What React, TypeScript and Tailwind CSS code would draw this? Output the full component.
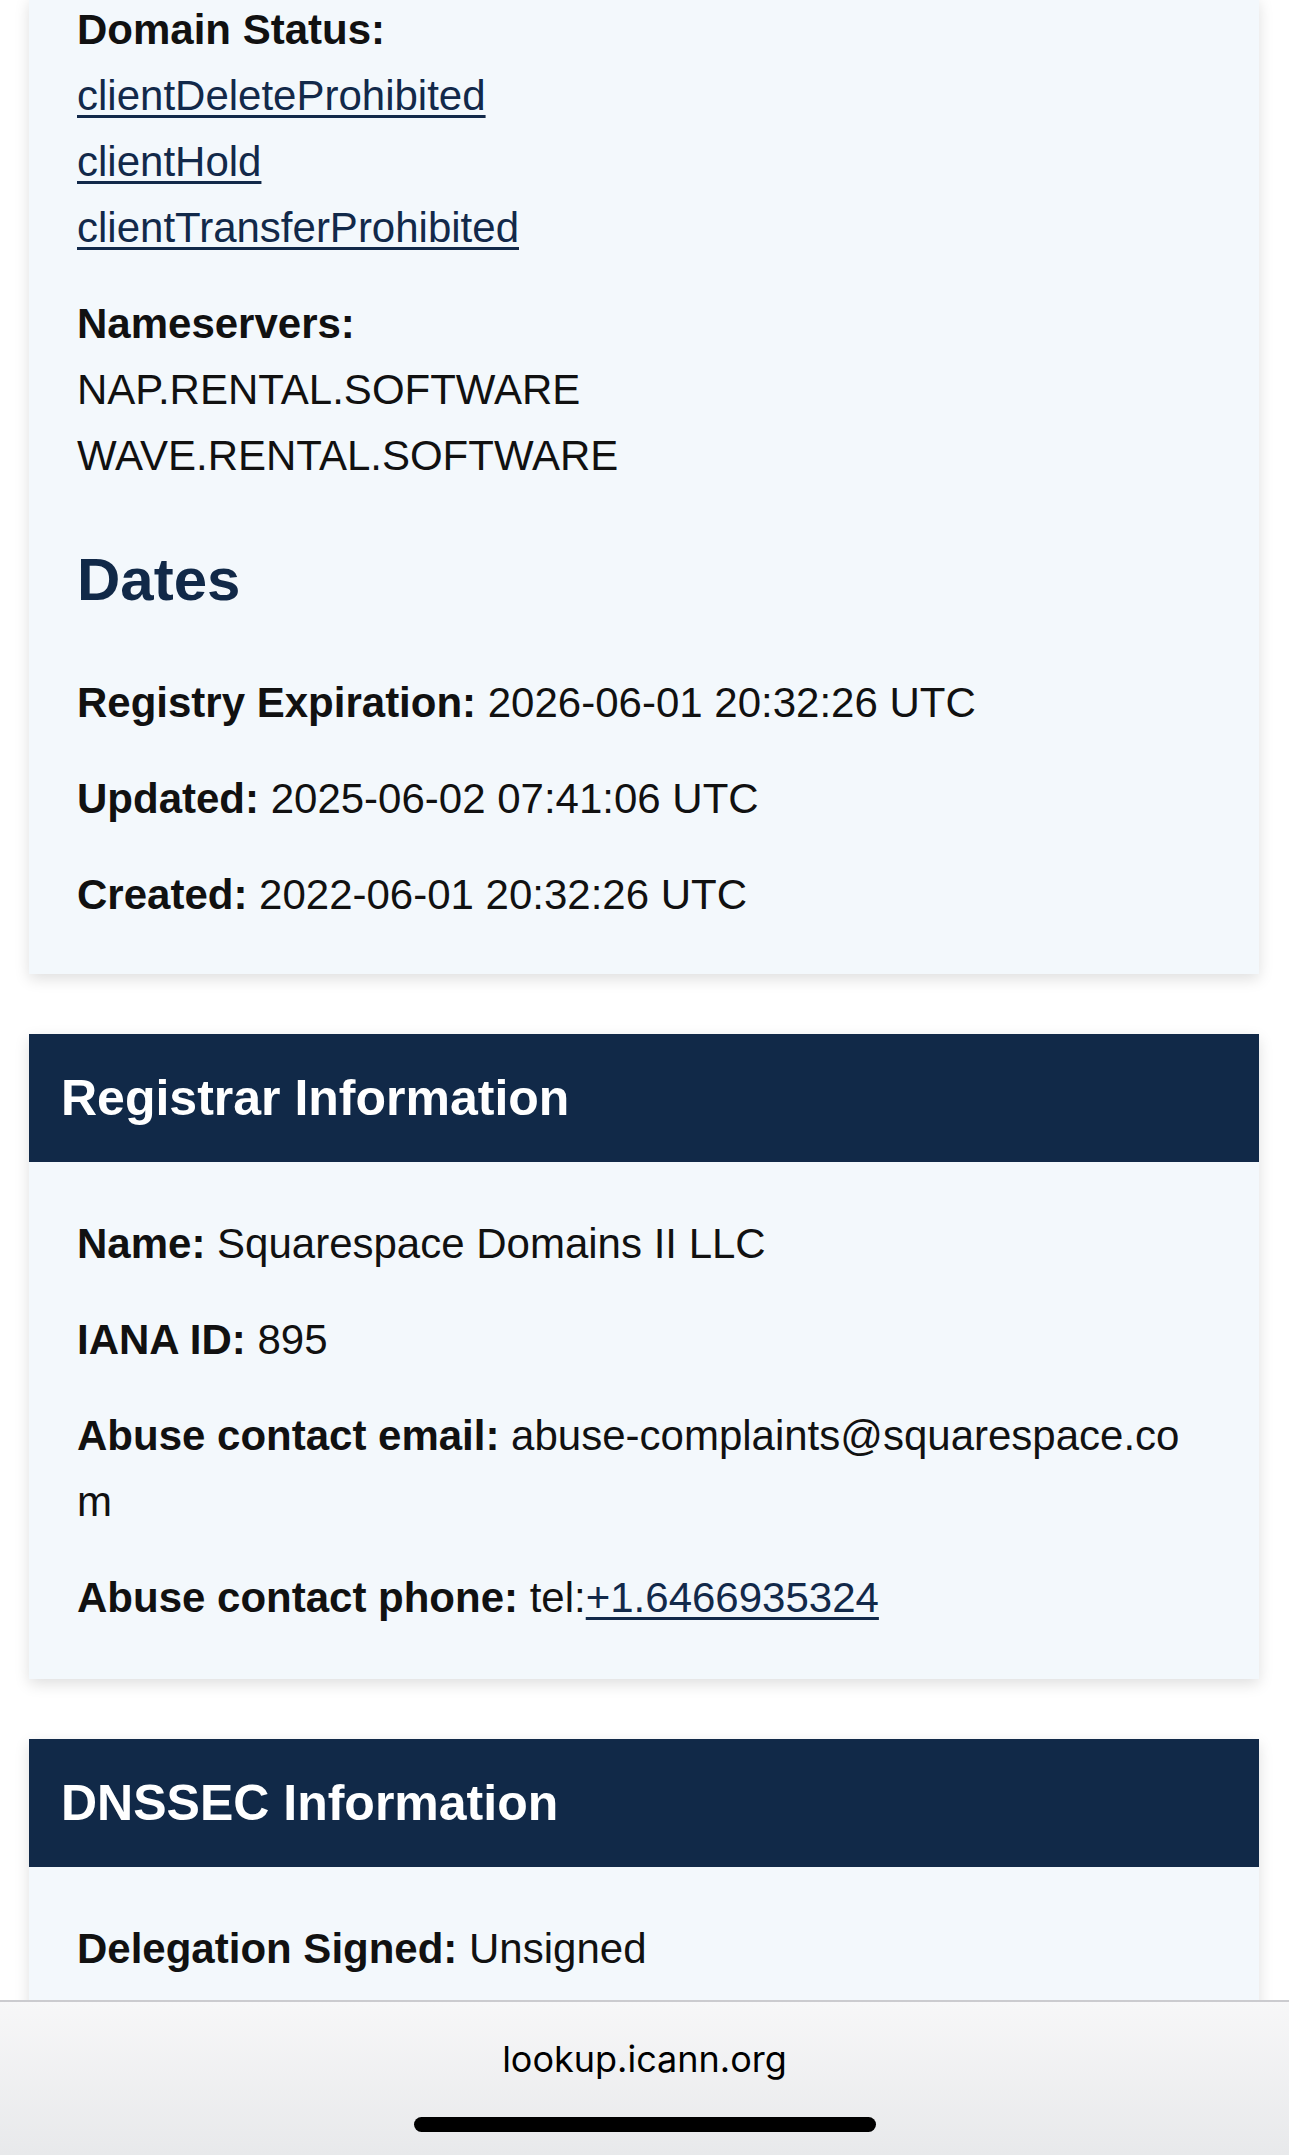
import type { ReactNode } from 'react';

const FONT = '[font-family:"Liberation_Sans",Arial,Helvetica,sans-serif]';

function Field({ label, children }: { label: string; children: ReactNode }) {
  return (
    <p className="text-[42px] leading-[66px] text-[#111]">
      <b className="font-bold">{label}</b> {children}
    </p>
  );
}

function SectionHeader({ title }: { title: string }) {
  return (
    <div className="bg-[#112948] pl-[32px] pr-[30px] py-[35px]">
      <h2 className="text-[50px] leading-[58px] font-bold text-white">{title}</h2>
    </div>
  );
}

const statuses = ['clientDeleteProhibited', 'clientHold', 'clientTransferProhibited'];
const nameservers = ['NAP.RENTAL.SOFTWARE', 'WAVE.RENTAL.SOFTWARE'];

export default function App() {
  return (
    <div className={`relative h-[2155px] overflow-hidden bg-white ${FONT}`}>
      <div className="flex flex-col gap-[60px] pl-[29px] pr-[30px]">
        {/* Domain information (scrolled) */}
        <section className="-mt-[3px] bg-[#f3f8fc] pl-[48px] pr-[57px] pb-[46px] shadow-[0_5px_14px_rgba(0,0,0,0.13)]">
          <div className="text-[42px] leading-[66px] text-[#111]">
            <b className="block font-bold">Domain Status:</b>
            {statuses.map((s) => (
              <a
                key={s}
                href="#"
                className="block w-fit text-[#12294a] underline decoration-[3px] underline-offset-[5px]"
              >
                {s}
              </a>
            ))}
          </div>
          <div className="mt-[30px] text-[42px] leading-[66px] text-[#111]">
            <b className="block font-bold">Nameservers:</b>
            {nameservers.map((n) => (
              <div key={n}>{n}</div>
            ))}
          </div>

          <h3 className="mt-[56px] mb-[56px] text-[60px] leading-[69px] font-bold text-[#112948]">Dates</h3>
          <div className="flex flex-col gap-[30px]">
            <Field label="Registry Expiration:">2026-06-01 20:32:26 UTC</Field>
            <Field label="Updated:">2025-06-02 07:41:06 UTC</Field>
            <Field label="Created:">2022-06-01 20:32:26 UTC</Field>
          </div>
        </section>

        {/* Registrar */}
        <section className="bg-[#f3f8fc] shadow-[0_5px_14px_rgba(0,0,0,0.13)]">
          <SectionHeader title="Registrar Information" />
          <div className="flex flex-col gap-[30px] pl-[48px] pr-[57px] pt-[49px] pb-[48px]">
            <Field label="Name:">Squarespace Domains II LLC</Field>
            <Field label="IANA ID:">895</Field>
            <p className="text-[42px] leading-[66px] text-[#111] break-all">
              <b className="font-bold break-normal">Abuse contact email:</b> abuse-complaints@squarespace.com
            </p>
            <Field label="Abuse contact phone:">
              tel:
              <a href="#" className="text-[#12294a] underline decoration-[3px] underline-offset-[5px]">
                +1.6466935324
              </a>
            </Field>
          </div>
        </section>

        {/* DNSSEC */}
        <section className="bg-[#f3f8fc] shadow-[0_5px_14px_rgba(0,0,0,0.13)]">
          <SectionHeader title="DNSSEC Information" />
          <div className="flex flex-col gap-[30px] pl-[48px] pr-[57px] pt-[49px] pb-[200px]">
            <Field label="Delegation Signed:">Unsigned</Field>
          </div>
        </section>
      </div>

      {/* Safari bottom bar overlay */}
      <div className="absolute inset-x-0 bottom-0 flex h-[155px] flex-col items-center border-t-[2px] border-[#cbcbcf] bg-gradient-to-b from-[#f7f7f8] to-[#e8e9eb]">
        <div className="mt-[33px] text-[36px] leading-[48px] text-black [font-family:Inter,'Liberation_Sans',sans-serif]">
          lookup.icann.org
        </div>
        <div className="mt-[34px] h-[15px] w-[462px] rounded-full bg-black" />
      </div>
    </div>
  );
}
